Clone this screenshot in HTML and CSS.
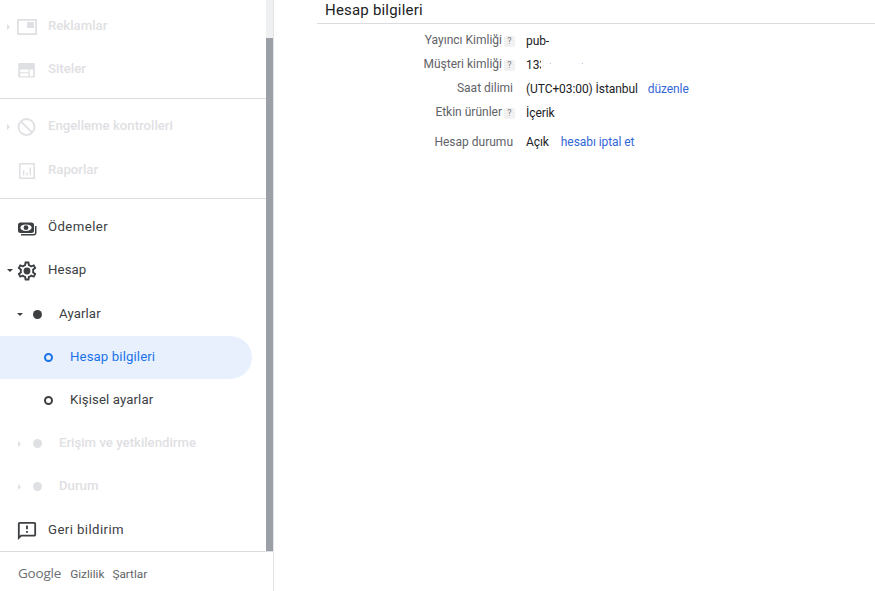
FILE: index.html
```html
<!DOCTYPE html>
<html lang="tr">
<head>
<meta charset="utf-8">
<title>Hesap bilgileri</title>
<link rel="stylesheet" href="styles.css">
</head>
<body>
<div class="app">
  <aside class="sidebar">
    <div class="nav-wrap">
      <nav class="nav">
        <div class="group first">
          <div class="item dim"><span class="caret right"></span><svg class="icon" viewBox="0 0 20 20"><path fill="none" stroke="currentColor" stroke-width="1.800" stroke-linejoin="round" d="M.9 2.900h18.200v14.200H.9z"/><path fill="currentColor" d="M10 5h7v6h-7z"/></svg><span class="label">Reklamlar</span></div>
          <div class="item dim"><span class="caret none"></span><svg class="icon" viewBox="0 0 20 20"><path fill="currentColor" d="M2 3h15a.8.8 0 01.8.8v13a.8.8 0 01-.8.8H2a.8.800 0 01-.8-.8v-13A.8.800 0 012 3zm1.200 6.500v2.700h8.300V9.500zm0 3.800v3h8.300v-3zm9.600-3.800v6.800h3.300V9.500z"/></svg><span class="label">Siteler</span></div>
        </div>
        <div class="group second">
          <div class="item dim spaced"><span class="caret right"></span><svg class="icon" viewBox="0 0 20 20"><circle cx="9.500" cy="10" r="8" fill="none" stroke="currentColor" stroke-width="1.800"/><path stroke="currentColor" stroke-width="1.800" d="M3.900 4.400l11.200 11.200"/></svg><span class="label">Engelleme kontrolleri</span></div>
          <div class="item dim"><span class="caret none"></span><svg class="icon" viewBox="0 0 20 20"><path fill="none" stroke="currentColor" stroke-width="1.600" stroke-linejoin="round" d="M2.800 2.800h14.400v14.400H2.800z"/><path fill="currentColor" d="M6 9h1.400v5.500H6zM9.300 11.500h1.400v3H9.300zM12.600 6.500H14v8h-1.400z"/></svg><span class="label">Raporlar</span></div>
        </div>
        <div class="group last">
          <div class="item"><span class="caret none"></span><svg class="icon" viewBox="0 0 20 20"><path fill="currentColor" d="M3.500 4.500h11a2.500 2.500 0 012.500 2.500v5.500a2.500 2.500 0 01-2.500 2.500h-11A2.500 2.500 0 011 12.500V7a2.500 2.500 0 012.500-2.500z"/><ellipse cx="9" cy="9.700" rx="5.600" ry="3.300" fill="#fff"/><circle cx="9" cy="9.700" r="2.400" fill="currentColor"/><path fill="currentColor" d="M18 8h1.500v6.500a3 3 0 01-3 3H4v-1.500h12.500a1.500 1.500 0 001.500-1.500z"/></svg><span class="label wide">Ödemeler</span></div>
          <div class="item"><span class="caret down"></span><svg class="icon" viewBox="1.500 1.500 21 21"><path fill="currentColor" d="M19.430 12.980c.04-.32.07-.64.07-.98s-.03-.66-.07-.98l2.110-1.650c.19-.15.24-.42.120-.64l-2-3.460c-.12-.22-.39-.3-.61-.22l-2.490 1c-.52-.4-1.080-.73-1.690-.98l-.38-2.650A.488.488 0 0014 2h-4c-.25 0-.46.180-.49.420l-.38 2.650c-.61.25-1.170.59-1.690.98l-2.490-1c-.23-.09-.49 0-.61.22l-2 3.460c-.13.220-.07.490.12.640l2.110 1.650c-.04.320-.07.650-.07.980s.03.660.07.980l-2.110 1.650c-.19.150-.24.420-.12.640l2 3.460c.12.220.39.300.61.220l2.490-1c.52.400 1.080.730 1.690.980l.38 2.650c.03.240.24.420.49.420h4c.25 0 .46-.180.49-.420l.38-2.650c.61-.250 1.170-.590 1.690-.980l2.490 1c.23.090.49 0 .61-.220l2-3.460c.12-.220.07-.490-.12-.640l-2.110-1.650zM17.450 11.270c.04.310.05.520.05.730s-.02.430-.05.730l-.14 1.130.89.700 1.080.840-.7 1.210-1.270-.51-1.040-.42-.9.680c-.43.320-.84.560-1.250.730l-1.060.43-.16 1.130-.2 1.350h-1.400l-.19-1.350-.16-1.130-1.060-.43c-.43-.18-.83-.41-1.230-.71l-.91-.7-1.060.43-1.270.51-.7-1.210 1.080-.84.890-.7-.14-1.130c-.03-.31-.05-.54-.05-.74s.02-.43.05-.73l.14-1.130-.89-.7-1.080-.84.7-1.210 1.270.51 1.040.42.9-.68c.43-.32.84-.56 1.250-.73l1.060-.43.16-1.130.2-1.350h1.390l.19 1.350.16 1.130 1.060.43c.43.18.83.41 1.230.71l.91.7 1.060-.43 1.270-.51.7 1.210-1.070.85-.89.7.14 1.130z"/><circle cx="12" cy="12" r="3.600" fill="currentColor"/></svg><span class="label">Hesap</span></div>
          <div class="item sub lower"><span class="caret down"></span><span class="dot"></span><span class="label">Ayarlar</span></div>
          <div class="item leaf active"><span class="ring"></span><span class="label">Hesap bilgileri</span></div>
          <div class="item leaf"><span class="ring"></span><span class="label">Kişisel ayarlar</span></div>
          <div class="item sub dim"><span class="caret right"></span><span class="dot"></span><span class="label">Erişim ve yetkilendirme</span></div>
          <div class="item sub dim"><span class="caret right"></span><span class="dot"></span><span class="label">Durum</span></div>
          <div class="item lower"><span class="caret none"></span><svg class="icon" viewBox="0 0 22 22"><path fill="currentColor" d="M19 1H3C1.900 1 1 1.900 1 3v18l4-4h14c1.100 0 2-.9 2-2V3c0-1.100-.9-2-2-2zm0 14H4.170L3 16.170V3h16v12zM10 11h2v2h-2zm0-6h2v4h-2z"/></svg><span class="label wide">Geri bildirim</span></div>
        </div>
      </nav>
      <div class="scrollbar"><div class="thumb"></div></div>
    </div>
    <footer class="foot"><span class="google">Google</span><a>Gizlilik</a><a>Şartlar</a></footer>
  </aside>
  <main class="main">
    <h1 class="title">Hesap bilgileri</h1>
    <div class="rows">
      <div class="row"><div class="key">Yayıncı Kimliği<span class="help">?</span></div><div class="val">pub-</div></div>
      <div class="row"><div class="key">Müşteri kimliği<span class="help">?</span></div><div class="val"><span class="masked">133</span><span class="speck s1"></span><span class="speck s2"></span></div></div>
      <div class="row"><div class="key plain">Saat dilimi</div><div class="val">(UTC+03:00) İstanbul<a class="link">düzenle</a></div></div>
      <div class="row"><div class="key">Etkin ürünler<span class="help">?</span></div><div class="val">İçerik</div></div>
      <div class="row gap"><div class="key plain">Hesap durumu</div><div class="val">Açık<a class="link">hesabı iptal et</a></div></div>
    </div>
  </main>
</div>
</body>
</html>
```
FILE: styles.css
```css
* { box-sizing: border-box; }
html, body { margin: 0; height: 100%; overflow: hidden; background: #fff; }
body { font-family: Roboto, "Liberation Sans", sans-serif; color: #3c4043; }
.app { display: flex; height: 591px; }
.sidebar { width: 274px; flex: none; display: flex; flex-direction: column; border-right: 1px solid #e3e4e6; }
.nav-wrap { height: 551px; display: flex; flex: none; }
.nav { flex: 1; min-width: 0; padding-top: 5px; }
.scrollbar { width: 7px; flex: none; background: #eff0f2; padding-top: 38px; }
.thumb { height: 513px; background: #9aa0a6; }
.group { border-bottom: 1px solid #dadce0; }
.group.first { padding-bottom: 7px; margin-bottom: 6px; }
.group.second { padding-bottom: 6px; margin-bottom: 7px; }
.group.last { border: 0; padding-top: 0; }
.item { height: 43px; display: flex; align-items: center; padding-left: 5px; font-size: 13.200px; font-weight: 400; color: #3c4043; letter-spacing: .12px; }
.item .label { white-space: nowrap; position: relative; top: -1px; }
.item .label.wide { letter-spacing: .42px; }
.item.lower { margin-top: 1px; }
.item.spaced { margin-bottom: 1px; }
.item.dim { color: #dfe0e3; font-weight: 500; letter-spacing: 0; }
.caret { width: 0; height: 0; flex: none; margin-right: 7px; border: 3px solid transparent; }
.caret.right { border-left-color: #dfe0e3; border-right-width: 0; width: 3px; margin-left: 2px; margin-right: 8px; }
.caret.down { border-top: 3px solid #3c4043; border-bottom-width: 0; margin-left: 2px; margin-right: 5px; }
.sub .caret.down { margin-left: 1px; margin-right: 6px; }
.caret.none { width: 6px; border: 0; }
.icon { width: 20px; height: 20px; flex: none; margin-left: -1px; margin-right: 11px; }
.item.sub { padding-left: 16px; }
.dot { width: 9px; height: 9px; border-radius: 50%; background: currentColor; flex: none; margin-left: 4px; margin-right: 17px; }
.item.leaf { padding-left: 44px; width: 252px; }
.ring { width: 9px; height: 9px; border-radius: 50%; border: 2px solid currentColor; flex: none; margin-right: 17px; }
.item.active { background: #e8f0fe; color: #1a73e8; border-radius: 0 22px 22px 0; }
.foot { height: 40px; flex: none; border-top: 1px solid #dadce0; display: flex; align-items: center; padding: 4px 0 0 18px; font-size: 11.800px; color: #5f6368; }
.foot a { margin-left: 8px; }
.foot .google { font-family: "Open Sans", sans-serif; font-size: 13.500px; color: #6b6f73; margin-right: 1px; letter-spacing: -.2px; position: relative; top: -1px; }
.main { flex: 1; padding: 0 0 0 43px; min-width: 0; }
.title { margin: 0; font-size: 15px; font-weight: 400; color: #202124; height: 24px; line-height: 20px; padding-left: 8px; border-bottom: 1px solid #dadce0; letter-spacing: .2px; }
.rows { padding-top: 5px; font-size: 12px; }
.row { display: flex; height: 24px; align-items: center; }
.row.gap { margin-top: 5px; }
.key { width: 198px; flex: none; text-align: right; color: #5f6368; white-space: nowrap; margin-bottom: 2px; }
.key.plain { padding-right: 2px; }
.row.gap .key { margin-bottom: 0; }
.help { display: inline-block; width: 11px; height: 11px; margin-left: 2px; background: #f1f1f1; color: #808080; font-size: 9px; line-height: 11px; text-align: center; border-radius: 2px; vertical-align: 0; }
.val { padding-left: 11px; color: #202124; white-space: nowrap; letter-spacing: -.08px; }
.masked { display: inline-block; position: relative; width: 20px; }
.masked::after { content: ""; position: absolute; left: 15px; top: 0; width: 6px; height: 100%; background: #fff; }
.speck { display: inline-block; width: 1px; height: 1px; background: #a9c8ee; vertical-align: 5px; }
.speck.s1 { margin-left: 4px; }
.speck.s2 { margin-left: 31px; }
.link { color: #3367d6; margin-left: 10px; }
.row.gap .link { margin-left: 12px; letter-spacing: -.08px; }
```
